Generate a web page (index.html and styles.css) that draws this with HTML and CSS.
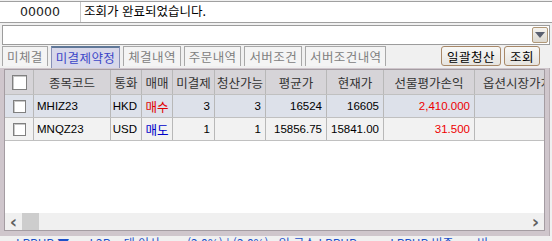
FILE: index.html
```html
<!DOCTYPE html>
<html lang="ko">
<head>
  <meta charset="UTF-8">
  <title>미결제약정</title>
  <link rel="stylesheet" href="styles.css">
</head>
<body>
  <div class="screen">
    <!-- 메시지 줄 -->
    <div class="msg-row">
      <div class="msg-code">00000</div>
      <div class="msg-text">조회가 완료되었습니다.</div>
    </div>

    <!-- 콤보 -->
    <div class="combo">
      <div class="combo-text"></div>
      <div class="combo-btn"><span class="arrow"></span></div>
    </div>

    <!-- 탭 -->
    <div class="tab-row">
      <div class="tabs">
        <div class="tab">미체결</div>
        <div class="tab active">미결제약정</div>
        <div class="tab">체결내역</div>
        <div class="tab">주문내역</div>
        <div class="tab">서버조건</div>
        <div class="tab">서버조건내역</div>
      </div>
      <div class="actions">
        <button class="act-btn">일괄청산</button>
        <button class="act-btn">조회</button>
      </div>
    </div>

    <!-- 그리드 -->
    <div class="grid-frame">
      <div class="grid">
        <div class="row head">
          <div class="cell c-chk"><span class="chk"></span></div>
          <div class="cell c-code">종목코드</div>
          <div class="cell c-cur">통화</div>
          <div class="cell c-side">매매</div>
          <div class="cell c-open">미결제</div>
          <div class="cell c-avail">청산가능</div>
          <div class="cell c-avg">평균가</div>
          <div class="cell c-now">현재가</div>
          <div class="cell c-pnl">선물평가손익</div>
          <div class="cell c-opt">옵션시장가치</div>
        </div>
        <div class="row odd">
          <div class="cell c-chk"><span class="chk"></span></div>
          <div class="cell c-code left">MHIZ23</div>
          <div class="cell c-cur right">HKD</div>
          <div class="cell c-side buy">매수</div>
          <div class="cell c-open right">3</div>
          <div class="cell c-avail right">3</div>
          <div class="cell c-avg right">16524</div>
          <div class="cell c-now right">16605</div>
          <div class="cell c-pnl right red">2,410.000</div>
          <div class="cell c-opt"></div>
        </div>
        <div class="row even">
          <div class="cell c-chk"><span class="chk"></span></div>
          <div class="cell c-code left">MNQZ23</div>
          <div class="cell c-cur right">USD</div>
          <div class="cell c-side sell">매도</div>
          <div class="cell c-open right">1</div>
          <div class="cell c-avail right">1</div>
          <div class="cell c-avg right">15856.75</div>
          <div class="cell c-now right">15841.00</div>
          <div class="cell c-pnl right red">31.500</div>
          <div class="cell c-opt"></div>
        </div>
        <div class="grid-empty"></div>
        <div class="hscroll">
          <span class="sc-arrow">&lsaquo;</span>
          <span class="sc-thumb"></span>
          <span class="sc-track"></span>
          <span class="sc-arrow">&rsaquo;</span>
        </div>
      </div>
    </div>

    <div class="status">LPPUP ▼ &nbsp;&nbsp;&nbsp;&nbsp; L2P &nbsp;&nbsp; 대 이사 &nbsp;&nbsp;&nbsp;&nbsp;&nbsp;&nbsp; (2.0%) | (2.0%) &nbsp; 일 급소 LPPUP &nbsp;&nbsp;&nbsp;&nbsp;&nbsp;&nbsp;&nbsp;&nbsp; LPPUP 비중 &nbsp;&nbsp;&nbsp;&nbsp;&nbsp; 비</div>
  </div>
</body>
</html>
```

FILE: styles.css
```css
/* 기본 화면 */
body {
  margin: 0;
  padding: 0;
  background: #f0f0f0;
  font-family: "Noto Sans CJK KR", "DejaVu Sans", sans-serif;
  font-size: 12px;
  color: #000;
}

.screen {
  width: 552px;
  height: 241px;
  overflow: hidden;
  display: flex;
  flex-direction: column;
}
.screen > * {
  flex-shrink: 0;
}

/* 메시지 줄 */
.msg-row {
  display: flex;
  height: 20px;
  margin-top: 1px;
  background: #fff;
  border-top: 1px solid #a0a0a0;
  border-bottom: 1px solid #a0a0a0;
}
.msg-code {
  width: 80px;
  text-align: center;
  line-height: 20px;
  border-right: 1px solid #c8c8c8;
  font-family: "DejaVu Sans", sans-serif;
  font-size: 12.5px;
  color: #222;
}
.msg-text {
  flex: 1;
  padding-left: 3px;
  line-height: 18px;
  font-size: 12.5px;
}

/* 콤보 */
.combo {
  display: flex;
  height: 18px;
  margin: 2px 2px 0 2px;
  background: #fff;
  border: 1px solid #9c9c9c;
}
.combo-text {
  flex: 1;
}
.combo-btn {
  width: 14px;
  margin: 1px;
  background: linear-gradient(#f6f4f0, #dcd8d0);
  border: 1px solid #b09878;
  border-radius: 2px;
  display: flex;
  align-items: center;
  justify-content: center;
}
.arrow {
  width: 0;
  height: 0;
  border-left: 5px solid transparent;
  border-right: 5px solid transparent;
  border-top: 6px solid #5a6070;
}

/* 탭 */
.tab-row {
  display: flex;
  justify-content: space-between;
  align-items: flex-end;
  height: 23px;
  padding: 0 12px 0 2px;
}
.tabs {
  display: flex;
  gap: 3px;
}
.tab {
  height: 19px;
  line-height: 19px;
  padding: 0 4px;
  background: #f4f4f4;
  border: 1px solid #a8a8a8;
  border-bottom: none;
  color: #808080;
  font-size: 12.5px;
  letter-spacing: 0.4px;
}
.tab.active {
  height: 20px;
  line-height: 20px;
  background: #d8d8ea;
  border-color: #8890b8;
  border-top: 2px solid #607898;
  color: #3c46c8;
}
.actions {
  display: flex;
  gap: 3px;
  margin-bottom: 2px;
}
.act-btn {
  height: 20px;
  padding: 0 5px;
  background: linear-gradient(#f8f8f6, #e6e4e0);
  border: 1px solid #a88868;
  border-radius: 3px;
  font-family: "Noto Sans CJK KR", sans-serif;
  font-size: 12.5px;
  letter-spacing: 0.5px;
  color: #000;
}

/* 그리드 */
.grid-frame {
  margin: 0 2px 0 0;
  padding: 1px 4px 5px 4px;
  background: #cfc6cc;
  border-right: 1px solid #b8aeb4;
}
.grid {
  height: 160px;
  display: flex;
  flex-direction: column;
  background: #fff;
  border: 1px solid #a49ca2;
}
.row {
  display: flex;
  height: 22px;
  flex-shrink: 0;
  border-bottom: 1px solid #c0c0c0;
}
.row.head {
  height: 24px;
  background: #d6d4d8;
  color: #333;
}
.row.odd {
  background: #dde1ea;
}
.row.even {
  background: #f2f2f2;
}
.cell {
  display: flex;
  align-items: center;
  justify-content: center;
  border-right: 1px solid #b8b8b8;
  box-sizing: border-box;
  white-space: nowrap;
  overflow: hidden;
  font-size: 12.5px;
}
.row:not(.head) .cell {
  font-family: "Liberation Sans", sans-serif;
  font-size: 11.5px;
}
.row:not(.head) .cell.c-side {
  font-family: "Noto Sans CJK KR", sans-serif;
  font-size: 12.5px;
}
.cell.left {
  justify-content: flex-start;
  padding-left: 3px;
}
.cell.right {
  justify-content: flex-end;
  padding-right: 4px;
}
.c-chk { width: 29px; }
.c-code { width: 77px; }
.c-cur { width: 31px; }
.c-side { width: 31px; }
.c-open { width: 42px; }
.c-avail { width: 51px; }
.c-avg { width: 61px; }
.c-now { width: 57px; }
.c-pnl { width: 91px; }
.c-opt { flex: 1; justify-content: flex-start; padding-left: 8px; border-right: none; }

.chk {
  width: 11px;
  height: 11px;
  background: #fff;
  border: 1px solid #808080;
  box-shadow: inset 1px 1px 0 #c8c8c8;
}
.head .chk {
  width: 13px;
  height: 13px;
}
.buy { color: #e00000; }
.sell { color: #0000c8; }
.red { color: #ee0000; }

.grid-empty {
  flex: 1;
}

/* 가로 스크롤 */
.hscroll {
  display: flex;
  align-items: center;
  height: 17px;
  flex-shrink: 0;
  background: #f0f0f0;
}
.sc-arrow {
  width: 17px;
  text-align: center;
  font-family: "DejaVu Sans", sans-serif;
  font-size: 18px;
  font-weight: bold;
  color: #606060;
  line-height: 17px;
}
.sc-thumb {
  width: 17px;
  height: 17px;
  background: #cdcdcd;
}
.sc-track {
  flex: 1;
}

/* 하단 상태줄 (잘림) */
.status {
  height: 6px;
  padding-left: 16px;
  color: #1e50c8;
  font-size: 12px;
  line-height: 14px;
  white-space: nowrap;
  overflow: hidden;
}
```
